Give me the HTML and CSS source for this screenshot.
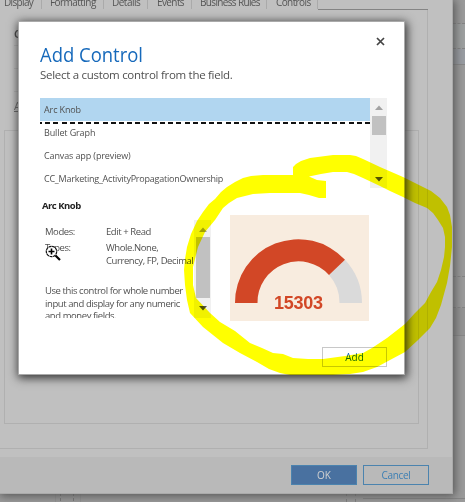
FILE: index.html
```html
<!DOCTYPE html>
<html lang="en">
<head>
<meta charset="utf-8">
<title>Add Control</title>
<link rel="stylesheet" href="styles.css">
</head>
<body>
<div class="page">
  <aside class="side"><i class="s1"></i><i class="s2"></i><i class="s3"></i><i class="s4"></i><i class="s5"></i><i class="s6"></i><i class="s7"></i></aside>
  <div class="ground"><i class="g1"></i><i class="g2"></i><i class="g3"></i></div>
  <section class="window">
    <nav class="tabs">
      <span class="tab t1">Display</span><span class="tab t2">Formatting</span><span class="tab t3">Details</span><span class="tab t4">Events</span><span class="tab t5">Business Rules</span><span class="tab t6">Controls</span><span class="rest"></span>
    </nav>
    <div class="panel">
      <div class="heading">C</div>
      <div class="row"></div><div class="row"></div>
      <div class="link">A</div>
      <div class="box"></div>
    </div>
    <footer class="footer"><button class="ok">OK</button><button class="cancel">Cancel</button></footer>
  </section>

  <section class="modal">
    <header class="head">
      <h1>Add Control</h1>
      <svg class="close" viewBox="0 0 9 9"><path d="M1 1l7 7M8 1l-7 7"/></svg>
    </header>
    <p class="sub">Select a custom control from the field.</p>
    <div class="list">
      <ul>
        <li class="selected"><span class="i1">Arc Knob</span></li>
        <li><span class="i2">Bullet Graph</span></li>
        <li><span class="i3">Canvas app (preview)</span></li>
        <li><span class="i4">CC_Marketing_ActivityPropagationOwnership</span></li>
      </ul>
      <div class="bar"><svg class="up" viewBox="0 0 8 5"><path d="M0 5L4 0.5L8 5z"/></svg><div class="thumb"></div><svg class="down" viewBox="0 0 8 5"><path d="M0 0H8L4 4.5z"/></svg></div>
    </div>
    <div class="details">
      <div class="info">
        <h2>Arc Knob</h2>
        <div class="scroll">
          <div class="text">
            <dl><dt>Modes:</dt><dd>Edit + Read</dd><dt>Types:</dt><dd>Whole.None,<br>Currency, FP, Decimal</dd></dl>
            <p>Use this control for whole number<br>input and display for any numeric<br>and money fields.</p>
          </div>
          <div class="bar low"><svg class="up" viewBox="0 0 8 5"><path d="M0 5L4 0.5L8 5z"/></svg><div class="thumb"></div><svg class="down" viewBox="0 0 8 5"><path d="M0 0H8L4 4.5z"/></svg></div>
        </div>
      </div>
      <svg class="gauge" viewBox="0 0 139 106">
        <path fill="#dadada" d="M115 44.800A63.500 63.500 0 0 1 132 88H109.500A41 41 0 0 0 99 60z"/>
        <path fill="#d24726" d="M5 88A63.300 63.300 0 0 1 115 44.800L99 60A41 41 0 0 0 27.500 88z"/>
        <text x="68.500" y="93.500" textLength="49" text-anchor="middle">15303</text>
      </svg>
    </div>
    <div class="actions"><button class="add">Add</button></div>
  </section>

  <svg class="marker" viewBox="0 0 465 502">
    <path fill-rule="evenodd" d="M293 175L263 175L251 176L243 178L235 182L227 187L221 192L215 199L209 204L203 212L197 221L191 234L187 247L185 259L184 270L185 285L187 300L190 313L203 327L223 343L240 353L257 362L269 369L280 373L290 375H333L350 374L363 372L377 367L390 360L405 352L417 341L430 328L436 318L441 305L447 283L450 266L452 247V227L450 215L447 207L440 198L431 191L423 187L403 177L380 167L363 159L356 156L350 155H333L310 158L301 161L296 164L293 167Z
    M326 181V198H319L309 195L300 193H270L253 194L245 196L237 198L229 203L223 208L215 220L205 232L198 247L193 267V285L196 298L210 313L220 322L235 331L250 343L262 348L273 353L283 354L293 358L308 359L323 359L345 356L363 353L372 348L387 338L405 324L415 313L425 303L431 292L437 282L441 270L444 257L445 247V237L443 228L438 220L433 213L427 208L415 203L403 197L390 191L380 186L363 178L354 174L347 172H333L321 174L309 176.500L317 180Z"/>
  </svg>
  <svg class="cursor" viewBox="0 0 17 17">
    <path d="M10 10l5 5" stroke="#fff" stroke-width="4"/><circle cx="6.500" cy="6.500" r="5.200" fill="#fff" stroke="#111" stroke-width="1.200" stroke-dasharray="3 .5"/>
    <path d="M3.500 6.500h6M6.500 3.500v6" stroke="#000" stroke-width="1.600"/><path d="M10.500 10.500l4.500 4.500" stroke="#000" stroke-width="2.200"/>
  </svg>
</div>
</body>
</html>
```
FILE: styles.css
```css
* { box-sizing: border-box; }
body { margin: 0; font-family: "Open Sans", "Noto Sans", sans-serif; color: #505050; }
h1, h2, p, ul, dl, dd { margin: 0; padding: 0; font-weight: 400; }
button { font: 10px "Open Sans", sans-serif; padding: 0; border-radius: 0; }
.page { position: relative; width: 465px; height: 502px; overflow: hidden; background: #9b9b9b; }
.side { position: absolute; left: 453px; top: 0; width: 12px; height: 502px; display: flex; flex-direction: column; }
.side i { border-bottom: 1px dashed #858585; flex: none; }
.s1 { height: 24px; }
.s2 { height: 25px; background: #9ea1a1; }
.s3 { height: 16px; background: #999da3; }
.side .s3, .side .s6, .side .s7 { border-bottom-style: solid; border-color: #898989; }
.s4 { height: 212px; }
.s5 { height: 31px; }
.s6 { height: 28px; background: #959595; }
.s7 { height: 163px; }
.ground { position: absolute; left: 0; top: 493px; width: 465px; height: 9px; display: flex; }
.ground i { flex: none; }
.g1 { width: 26px; margin-left: 55px; border: 1px solid #929292; border-width: 0 1px; background: repeating-linear-gradient(#777 0 3px, #9b9b9b 3px 5px) 4px 0 / 1px 9px no-repeat, repeating-linear-gradient(#777 0 3px, #9b9b9b 3px 5px) 17px 0 / 1px 9px no-repeat; }
.g2 { width: 10px; margin-left: 265px; border: 1px dashed #7f7f7f; border-width: 0 1px; }
.g3 { width: 102px; height: 6px; margin-left: 7px; border-bottom: 1px solid #858585; }
.window { position: absolute; left: 0; top: 0; width: 453px; height: 494px; background: #c0c0c0; border: solid #aaa; border-width: 0 1px 1px 0; box-shadow: 1px 1px 9px 1px #555; }
.tabs { height: 10px; display: flex; overflow: hidden; font-size: 10px; color: #555; }
.tab { height: 9px; border-right: 1px solid #aaa; white-space: nowrap; flex: none; line-height: 4px; }
.t1 { width: 42px; padding-left: 4px; letter-spacing: -.65px; }
.t2 { width: 62px; padding-left: 8px; letter-spacing: -.55px; }
.t3 { width: 44px; padding-left: 8px; letter-spacing: -.5px; }
.t4 { width: 44px; padding-left: 9px; letter-spacing: -.6px; }
.t5 { width: 75px; padding-left: 8px; letter-spacing: -.65px; }
.t6 { width: 51px; padding-left: 9px; letter-spacing: -.6px; }
.rest { width: 110px; border-bottom: 1px solid #858585; }
.panel { width: 428px; height: 439px; border: solid #b0b0b0; border-width: 0 1px 1px 0; padding-top: 16px; }
.heading, .link { margin-left: 14px; font-size: 11px; line-height: 15px; height: 19px; width: 370px; }
.heading { color: #444; font-weight: 600; }
.row { height: 23px; width: 370px; margin-left: 14px; border-top: 1px solid #b2b2b2; }
.link { border-top: 1px solid #b2b2b2; padding-top: 6px; height: 39px; text-decoration: underline; color: #666; }
.box { width: 415px; height: 294px; margin-left: 4px; border: 1px solid #b0b0b0; }
.footer { height: 36px; margin-top: 8px; background: #b9b9b9; display: flex; gap: 6px; padding: 8px 0 0 291px; }
.ok, .cancel { width: 66px; height: 20px; border: 1px solid #4b83ae; line-height: 18px; }
.ok { background: #4971a0; color: #d0d0d0; }
.cancel { background: transparent; color: #3d7fb3; letter-spacing: -.3px; }
.modal { position: absolute; left: 19px; top: 22px; width: 385px; height: 352px; background: #fff; box-shadow: 0 0 0 1px #aaa, 1px 2px 9px 2px #333; padding: 14px 17px 0 21px; }
.head { display: flex; height: 32px; justify-content: space-between; }
h1 { font-size: 20.500px; line-height: 37px; color: #1669bb; white-space: nowrap; transform: scaleX(.9); transform-origin: 0 0; }
.close { width: 9px; height: 9px; margin: 1px 2px 0 0; fill: none; stroke: #444; stroke-width: 1.700; }
.sub { font-size: 11.500px; line-height: 14px; height: 30px; color: #505050; letter-spacing: -.29px; white-space: nowrap; }
.list { display: flex; height: 90px; }
ul { width: 330px; list-style: none; }
li { height: 23px; line-height: 18px; padding-left: 4px; font-size: 9px; white-space: nowrap; }
.selected { background: #b1d6f0; height: 23px; line-height: 24px; margin-bottom: 3px; position: relative; }
.selected::after { content: ""; position: absolute; left: 0; top: 24px; width: 330px; height: 2px; background: repeating-linear-gradient(90deg, #111 0 5px, #fff 5px 8.200px) -3px 0 / 333px 2px; }
.i1, .i2, .i3 { letter-spacing: -.12px; }
.i4 { letter-spacing: -.235px; }
.bar { width: 17px; background: #f1f1f1; display: flex; flex-direction: column; align-items: center; flex: none; }
.bar svg { width: 8px; height: 5px; flex: none; }
.up { fill: #a2a2a2; margin: 7px 0 6px; }
.down { fill: #505050; margin: auto 0 6px; }
.thumb { width: 14px; height: 19px; background: #c1c1c1; flex: none; }
.details { display: flex; height: 135px; }
.info { width: 190px; padding-top: 10px; flex: none; }
h2 { font-size: 9.500px; line-height: 16px; font-weight: 700; color: #222; margin-left: 2px; letter-spacing: -.5px; }
.scroll { height: 98px; margin-top: 6px; width: 171px; display: flex; overflow: hidden; font-size: 9.500px; }
.text { width: 154px; height: 98px; flex: none; overflow: hidden; padding: 6px 0 0 5px; white-space: nowrap; }
dl { display: grid; grid-template-columns: 61px 1fr; row-gap: 4px; line-height: 12.400px; height: 59px; align-content: start; letter-spacing: -.42px; }
.text p { line-height: 12.500px; letter-spacing: -.42px; }
.low .up { margin-bottom: 5px; }
.low .thumb { height: 61px; }
.low .down { margin-bottom: 7px; }
.gauge { width: 139px; height: 106px; margin-top: 27px; background: #f8ecdf; flex: none; }
.gauge text { font: 700 18px "Liberation Sans", Arial, sans-serif; fill: #d24726; }
.actions { display: flex; justify-content: flex-end; margin-top: 24px; }
.add { width: 65px; height: 20px; background: #fff; border: 1px solid #c8c8c8; color: #1669bb; line-height: 18px; }
.marker { position: absolute; left: 0; top: 0; width: 465px; height: 502px; fill: #ff0; mix-blend-mode: multiply; }
.cursor { position: absolute; left: 45px; top: 245px; width: 17px; height: 17px; }
```
